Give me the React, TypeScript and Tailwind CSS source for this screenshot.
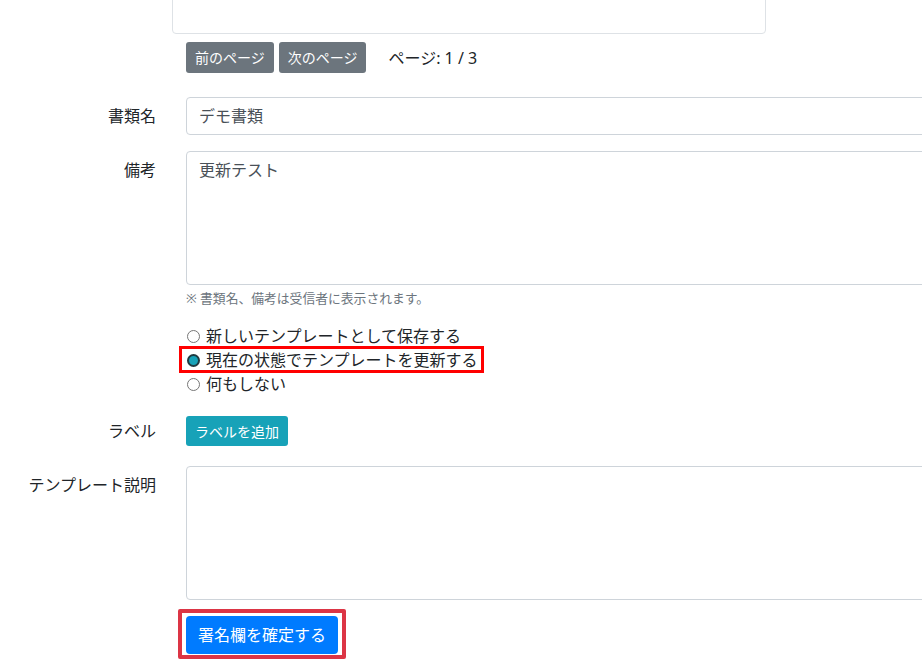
const font = { fontFamily: '"Noto Sans", "Noto Sans CJK JP", sans-serif' };

function Radio({ label, checked }: { label: string; checked?: boolean }) {
  return (
    <label className="flex h-6 items-center">
      <span
        className={
          checked
            ? 'ml-px flex h-[13px] w-[13px] items-center justify-center rounded-full border-2 border-[#1f3a40] bg-[#17a2b8]'
            : 'ml-px h-[13px] w-[13px] rounded-full border border-[#767676] bg-white'
        }
      />
      <span className="ml-[6px] text-base leading-6 text-[#212529]">{label}</span>
    </label>
  );
}

function Row({
  label,
  children,
  className,
  labelPad = 'pt-[7px]',
}: {
  label: string;
  children: React.ReactNode;
  className?: string;
  labelPad?: string;
}) {
  return (
    <div className={`flex ${className ?? ''}`}>
      <div className={`w-[156px] shrink-0 ${labelPad} text-right text-base leading-6 text-[#212529]`}>{label}</div>
      <div className="ml-[30px] w-[760px] shrink-0">{children}</div>
    </div>
  );
}

export default function App() {
  return (
    <div className="h-[661px] w-[922px] overflow-hidden bg-white" style={font}>
      {/* preview frame, cut off above */}
      <div className="ml-[172px] -mt-[40px] h-[74px] w-[594px] rounded-b-[4px] border border-[#dee2e6]" />

      <div className="ml-[186px] mt-[8px] flex items-center">
        <button className="h-[31px] rounded-[3px] bg-[#6c757d] px-[9px] text-sm leading-[21px] text-white">前のページ</button>
        <button className="ml-[5px] h-[31px] rounded-[3px] bg-[#6c757d] px-[9px] text-sm leading-[21px] text-white">次のページ</button>
        <span className="ml-[22px] text-base text-[#212529]">ページ: 1 / 3</span>
      </div>

      <Row label="書類名" className="mt-[24px]">
        <div className="h-[38px] rounded-[4px] border border-[#ced4da] px-3 py-[6px] text-base leading-6 text-[#495057]">デモ書類</div>
      </Row>

      <Row label="備考" className="mt-[16px]">
        <div className="h-[134px] rounded-[4px] border border-[#ced4da] px-3 py-[6px] text-base leading-6 text-[#495057]">更新テスト</div>
        <p className="mt-[4px] text-[12.8px] leading-[19px] text-[#6c757d]">※ 書類名、備考は受信者に表示されます。</p>
        <div className="mt-[16px] flex flex-col">
          <Radio label="新しいテンプレートとして保存する" />
          <div className="relative">
            <Radio label="現在の状態でテンプレートを更新する" checked />
            <div className="absolute left-[-7px] top-[-2px] h-[27px] w-[305px] border-[3px] border-[#ff0000]" />
          </div>
          <Radio label="何もしない" />
        </div>
      </Row>

      <Row label="ラベル" className="mt-[21px]" labelPad="pt-[2px]">
        <div className="-mt-[1px]">
          <button className="h-[30px] rounded-[3px] bg-[#17a2b8] px-[9px] text-sm leading-[21px] text-white">ラベルを追加</button>
        </div>
      </Row>

      <Row label="テンプレート説明" className="mt-[20px]">
        <div className="h-[134px] rounded-[4px] border border-[#ced4da]" />
      </Row>

      <div className="relative ml-[186px] mt-[16px] w-fit">
        <button className="h-[38px] rounded-[4px] bg-[#007bff] px-3 text-base leading-6 text-white">署名欄を確定する</button>
        <div className="absolute left-[-8px] top-[-7px] h-[50px] w-[168px] rounded-[2px] border-[4px] border-[#dc3545]" />
      </div>
    </div>
  );
}
